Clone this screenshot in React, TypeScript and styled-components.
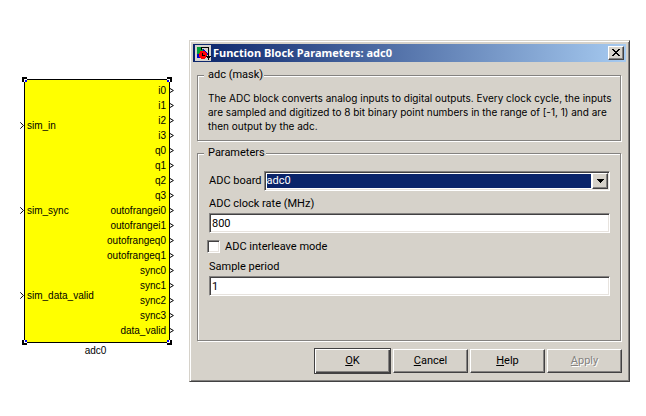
import React, { useState } from 'react';
import styled, { createGlobalStyle, css } from 'styled-components';

const face = '#d6d2ca';
const shade = '#848280';
const dark = '#424142';
const navy = '#0a246a';

const GlobalStyle = createGlobalStyle`
  * { box-sizing: border-box; }
  body {
    margin: 0;
    background: #fff;
    color: #000;
    font: 11px/14px Roboto, Arial, sans-serif;
  }
`;

const sunken = css`
  border: 1px solid;
  border-color: ${shade} #fff #fff ${shade};
  box-shadow: inset 1px 1px ${dark}, inset -1px -1px #e7e3de;
`;

const raised = css`
  border: 1px solid;
  border-color: #fff ${dark} ${dark} #fff;
  box-shadow: inset -1px -1px ${shade};
`;

const Page = styled.main`
  display: flex;
  align-items: flex-start;
  gap: 15px;
  padding: 40px 16px 32px 20px;
`;

const Block = styled.figure`
  margin: 38px 0 0;
  flex: none;
  width: 154px;
  font-family: "Liberation Sans", Arial, sans-serif;
`;

const BlockBody = styled.div`
  position: relative;
  display: flex;
  justify-content: space-between;
  margin: 1px 4px 0;
  padding: 3px 0 4px;
  border: 1px solid #000;
  background: #ff0;
  font-size: 10px;
  line-height: 15px;
`;

const PortList = styled.ul`
  display: flex;
  flex-direction: column;
  list-style: none;
  margin: 0;
  padding: 0;
`;

const InPort = styled.li`
  flex: 1;
  display: flex;
  align-items: center;
  gap: 3px;
  margin-left: -5px;
`;

const OutPort = styled.li`
  display: flex;
  align-items: center;
  justify-content: flex-end;
  gap: 4px;
  margin-right: -5px;
`;

const BlockName = styled.figcaption`
  padding-right: 3px;
  text-align: center;
  font-size: 10px;
  line-height: 15px;
`;

const HandleMark = styled.svg<{ $right?: boolean; $bottom?: boolean }>`
  position: absolute;
  ${p => (p.$right ? 'right: -3px;' : 'left: -3px;')}
  ${p => (p.$bottom ? 'bottom: -3px;' : 'top: -3px;')}
  transform: scale(${p => (p.$right ? -1 : 1)}, ${p => (p.$bottom ? -1 : 1)});
`;

const Dialog = styled.section`
  flex: 1;
  min-width: 0;
  padding: 2px;
  background: ${face};
  border: 1px solid;
  border-color: ${face} ${dark} ${dark} ${face};
  box-shadow: inset 1px 1px #fff, inset -1px -1px ${shade};
`;

const TitleBar = styled.header`
  display: flex;
  align-items: center;
  gap: 2px;
  height: 18px;
  margin: 1px;
  padding: 0 2px;
  background: linear-gradient(to right, ${navy}, #a6caf0);
`;

const Title = styled.h1`
  flex: 1;
  margin: 0;
  color: #fff;
  font: bold 11px/16px "Noto Sans", "Open Sans", sans-serif;
  white-space: nowrap;
`;

const CloseButton = styled.button`
  ${raised}
  display: flex;
  align-items: center;
  justify-content: center;
  width: 16px;
  height: 14px;
  padding: 0 1px 1px 0;
  background: ${face};
`;

const Form = styled.form`
  display: flex;
  flex-direction: column;
  gap: 5px;
  padding: 5px 6px 5px 5px;
`;

const Group = styled.fieldset`
  min-width: 0;
  margin: 0;
  padding: 0 4px 7px 10px;
  border: 1px solid ${shade};
  box-shadow: 1px 1px #fff, inset 1px 1px #fff;
`;

const Legend = styled.legend`
  margin-left: -4px;
  padding: 0 1px 0 4px;
  background: ${face};
`;

const Description = styled.p`
  margin: 9px 0 0;
  font: 10px/14px Inter, "Noto Sans", sans-serif;
`;

const Fields = styled.div`
  display: flex;
  flex-direction: column;
  padding: 11px 6px 30px 1px;
`;

const BoardRow = styled.div`
  display: flex;
  align-items: center;
  gap: 2px;
  margin-bottom: 6px;
`;

const SelectFrame = styled.div`
  ${sunken}
  flex: 1;
  display: grid;
  height: 20px;
  padding: 1px;
  background: #fff;
`;

const Select = styled.select`
  grid-area: 1 / 1;
  appearance: none;
  min-width: 0;
  margin: 1px 17px 1px 1px;
  padding: 0;
  border: 0;
  border-radius: 0;
  outline: none;
  background: ${navy};
  color: #fff;
  font: inherit;
`;

const DropArrow = styled.span`
  ${raised}
  grid-area: 1 / 1;
  justify-self: end;
  display: flex;
  align-items: center;
  justify-content: center;
  width: 16px;
  background: ${face};
  pointer-events: none;
`;

const TextInput = styled.input`
  ${sunken}
  width: 100%;
  height: 20px;
  margin: 2px 0 7px;
  padding: 0 2px;
  border-radius: 0;
  outline: none;
  background: #fff;
  font: inherit;
`;

const CheckRow = styled.label`
  display: flex;
  align-items: center;
  gap: 5px;
  height: 13px;
  margin: 0 0 7px -2px;
`;

const CheckBox = styled.input`
  ${sunken}
  appearance: none;
  width: 13px;
  height: 13px;
  margin: 0;
  background: #fff;
  &:checked { background: radial-gradient(#000 3px, #fff 4px); }
`;

const Actions = styled.div`
  display: flex;
  justify-content: flex-end;
  align-items: center;
  gap: 2px;
  padding-top: 2px;
  margin-right: -1px;
`;

const PushButton = styled.button<{ $default?: boolean }>`
  ${raised}
  width: 75px;
  height: 24px;
  padding: 0;
  background: ${face};
  color: #000;
  font: inherit;
  ${p => p.$default && css`
    width: 77px;
    height: 26px;
    border-color: ${dark};
    box-shadow: inset 1px 1px #fff, inset -1px -1px ${dark}, inset -2px -2px ${shade};
  `}
  &:disabled {
    color: ${shade};
    text-shadow: 1px 1px #fff;
  }
`;

const Chevron = ({ size }: { size: 'in' | 'out' }) =>
  size === 'in' ? (
    <svg width="4" height="7" viewBox="0 0 4 7" fill="none" stroke="#000" aria-hidden="true">
      <path d="M0.3 0.3 L3.4 3.5 L0.3 6.7" />
    </svg>
  ) : (
    <svg width="4" height="5" viewBox="0 0 4 5" fill="none" stroke="#000" aria-hidden="true">
      <path d="M0 0.5 L3.4 2.5 L0 4.5" />
    </svg>
  );

const Handle = (props: { $right?: boolean; $bottom?: boolean }) => (
  <HandleMark {...props} width="5" height="5" viewBox="0 0 5 5" shapeRendering="crispEdges" aria-hidden="true">
    <path d="M0 0h5v2H2v3H0z" fill="#000" />
    <path d="M2 2h3v3H2z" fill="#fff" />
    <path d="M3 3h2v2H3z" fill="#00f" />
  </HandleMark>
);

const ModelIcon = () => (
  <svg width="16" height="16" viewBox="0 0 16 16" shapeRendering="crispEdges" aria-hidden="true">
    <path d="M0 0h16v16H0z" fill="#d6d3ce" />
    <path d="M2 2h3l3 3v5H2z" fill="#00a038" />
    <path d="M2 9h3v4H2zM8 4l5 4v2H8z" fill="#0000d0" />
    <path d="M6 2h8v1H6zM13 2h1v9h-1zM6 2h1v3H6z" fill="#000" />
    <path d="M5 6h5v1h1v1h1v4h-1v1h-1v1H6v-1H5v-1H4V8h1z" fill="#f00" />
    <path d="M7 8h1v2H7zM7 10h3v1H7z" fill="#000" />
    <path d="M11 11h5v1h-1v1h-1v2h-1v-2h-1v-1h-1z" fill="#000" />
  </svg>
);

const inputs = ['sim_in', 'sim_sync', 'sim_data_valid'];
const outputs = [
  'i0', 'i1', 'i2', 'i3', 'q0', 'q1', 'q2', 'q3',
  'outofrangei0', 'outofrangei1', 'outofrangeq0', 'outofrangeq1',
  'sync0', 'sync1', 'sync2', 'sync3', 'data_valid',
];

export default function App() {
  const [rate, setRate] = useState('800');
  const [period, setPeriod] = useState('1');
  const [interleave, setInterleave] = useState(false);

  return (
    <>
      <GlobalStyle />
      <Page>
        <Block>
          <BlockBody>
            <PortList>
              {inputs.map(name => (
                <InPort key={name}><Chevron size="in" />{name}</InPort>
              ))}
            </PortList>
            <PortList>
              {outputs.map(name => (
                <OutPort key={name}>{name}<Chevron size="out" /></OutPort>
              ))}
            </PortList>
            <Handle />
            <Handle $right />
            <Handle $bottom />
            <Handle $right $bottom />
          </BlockBody>
          <BlockName>adc0</BlockName>
        </Block>

        <Dialog role="dialog" aria-labelledby="dialog-title">
          <TitleBar>
            <ModelIcon />
            <Title id="dialog-title">Function Block Parameters: adc0</Title>
            <CloseButton type="button" aria-label="Close">
              <svg width="8" height="7" viewBox="0 0 8 7" shapeRendering="crispEdges" aria-hidden="true">
                <path d="M0 0h2v1h1v1h2V1h1V0h2v1H7v1H6v1H5v1h1v1h1v1h1v1H6V6H5V5H3v1H2v1H0V6h1V5h1V4h1V3H2V2H1V1H0z" />
              </svg>
            </CloseButton>
          </TitleBar>
          <Form onSubmit={e => e.preventDefault()}>
            <Group>
              <Legend>adc (mask)</Legend>
              <Description>
                The ADC block converts analog inputs to digital outputs. Every clock cycle, the inputs
                are sampled and digitized to 8 bit binary point numbers in the range of [-1, 1) and are
                <br />
                then output by the adc.
              </Description>
            </Group>
            <Group>
              <Legend>Parameters</Legend>
              <Fields>
                <BoardRow>
                  <label htmlFor="board">ADC board</label>
                  <SelectFrame>
                    <Select id="board" defaultValue="adc0">
                      <option>adc0</option>
                      <option>adc1</option>
                    </Select>
                    <DropArrow>
                      <svg width="7" height="4" viewBox="0 0 7 4" shapeRendering="crispEdges" aria-hidden="true">
                        <path d="M0 0h7v1H6v1H5v1H4v1H3V3H2V2H1V1H0z" />
                      </svg>
                    </DropArrow>
                  </SelectFrame>
                </BoardRow>
                <label htmlFor="rate">ADC clock rate (MHz)</label>
                <TextInput id="rate" value={rate} onChange={e => setRate(e.target.value)} />
                <CheckRow>
                  <CheckBox type="checkbox" checked={interleave} onChange={e => setInterleave(e.target.checked)} />
                  ADC interleave mode
                </CheckRow>
                <label htmlFor="period">Sample period</label>
                <TextInput id="period" value={period} onChange={e => setPeriod(e.target.value)} />
              </Fields>
            </Group>
            <Actions>
              <PushButton $default type="submit"><u>O</u>K</PushButton>
              <PushButton type="button"><u>C</u>ancel</PushButton>
              <PushButton type="button"><u>H</u>elp</PushButton>
              <PushButton type="button" disabled><u>A</u>pply</PushButton>
            </Actions>
          </Form>
        </Dialog>
      </Page>
    </>
  );
}
